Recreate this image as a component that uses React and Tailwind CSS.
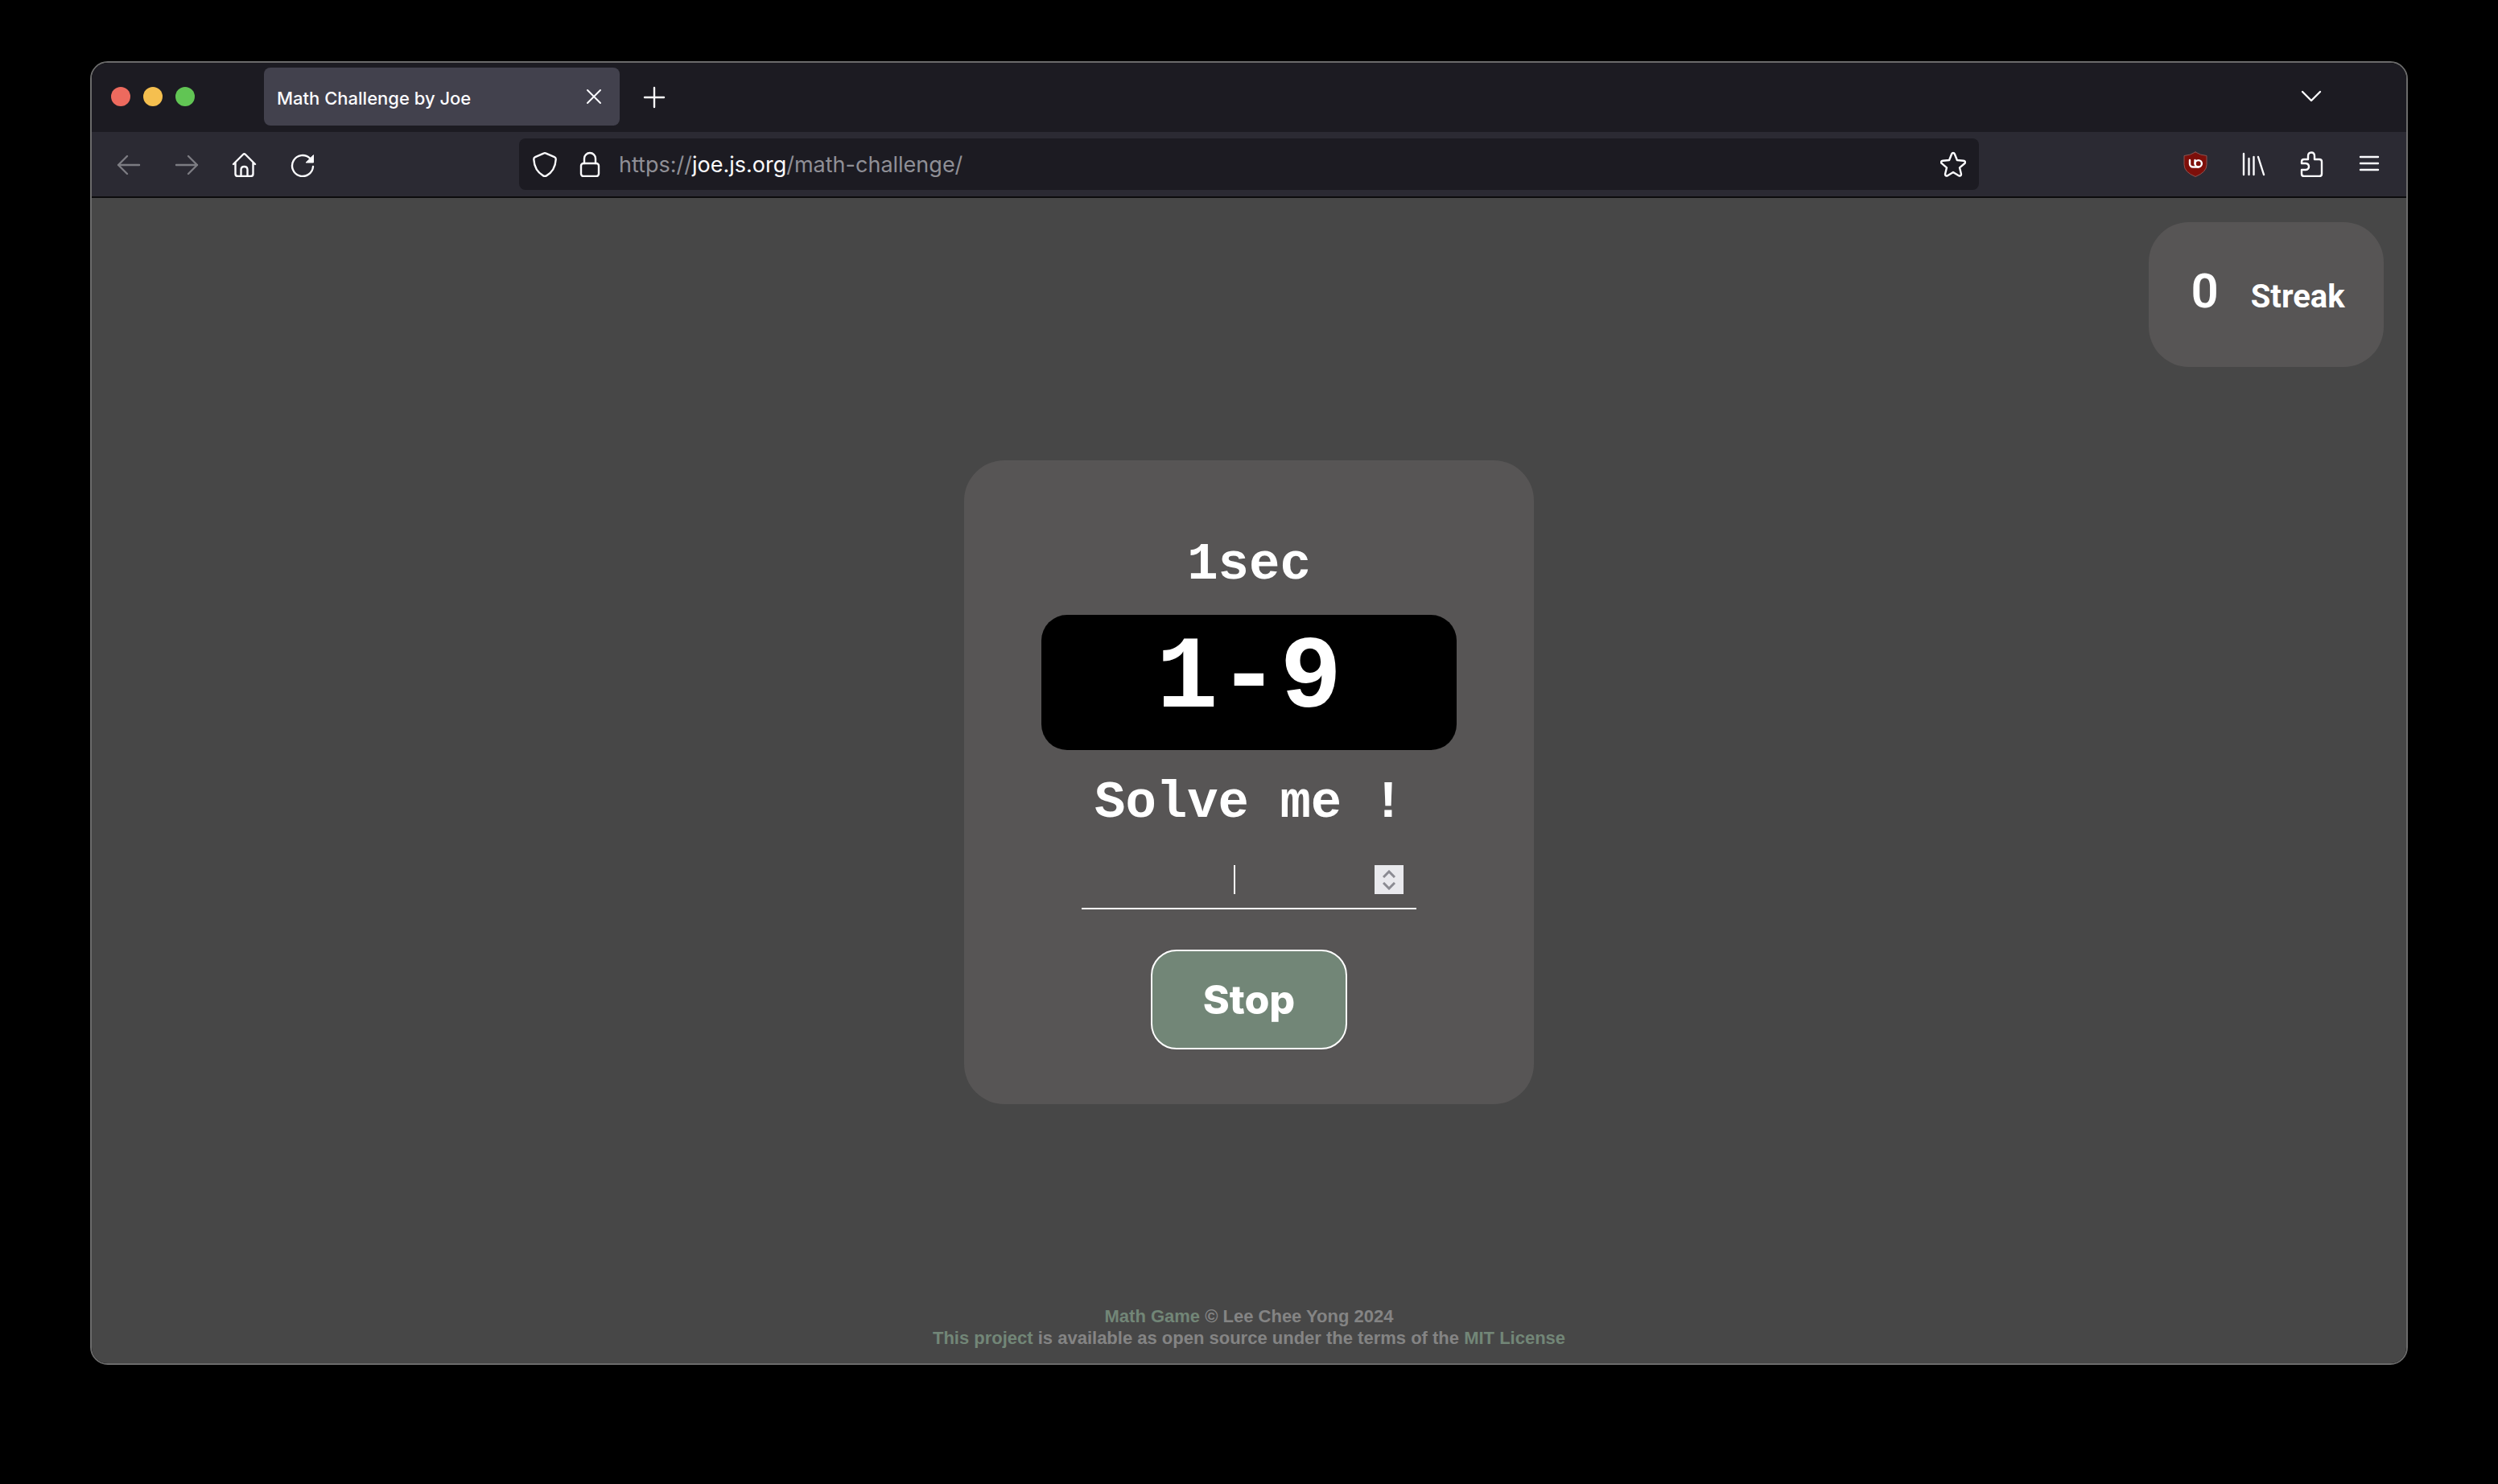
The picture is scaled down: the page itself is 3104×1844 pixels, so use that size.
import React from "react";

function Icon({ children, className = "size-8" }) {
  return (
    <svg
      viewBox="0 0 32 32"
      fill="none"
      stroke="currentColor"
      strokeWidth="2.4"
      strokeLinecap="round"
      strokeLinejoin="round"
      aria-hidden="true"
      className={className}
    >
      {children}
    </svg>
  );
}

function IconButton({ label, children, className = "text-[#fbfbfe]", disabled = false }) {
  return (
    <button type="button" aria-label={label} disabled={disabled} className={className}>
      {children}
    </button>
  );
}

function TabBar() {
  return (
    <div className="flex h-[86px] items-center bg-[#1c1b22] pr-[102px] pb-[2px] pl-6">
      <div className="flex gap-4">
        <button type="button" aria-label="Close window" className="size-6 rounded-full bg-[#ed6a5e]" />
        <button type="button" aria-label="Minimize window" className="size-6 rounded-full bg-[#f5bf4f]" />
        <button type="button" aria-label="Zoom window" className="size-6 rounded-full bg-[#61c554]" />
      </div>
      <div className="ml-[86px] flex h-[72px] w-[442px] items-center justify-between rounded-lg bg-[#42414d] px-4 text-[#fbfbfe]">
        <span className="pt-1 text-[22px] leading-8 font-medium">Math Challenge by Joe</span>
        <IconButton label="Close tab">
          <Icon>
            <path strokeWidth="2" d="M8 8l16 16M24 8L8 24" />
          </Icon>
        </IconButton>
      </div>
      <div className="ml-[27px] flex flex-1 items-center justify-between">
        <IconButton label="New tab">
          <Icon>
            <path d="M16 5v24M4 17h24" />
          </Icon>
        </IconButton>
        <IconButton label="List all tabs">
          <Icon>
            <path d="M5 10l11 11 11-11" />
          </Icon>
        </IconButton>
      </div>
    </div>
  );
}

function AddressBar() {
  return (
    <div className="flex h-16 items-center rounded-lg bg-[#1c1b22] px-4 text-[#fbfbfe]">
      <IconButton label="Tracking protection">
        <Icon>
          <path d="M15 2.400q1-.5 2 0l11 4.800q1.800.8 1.700 2.800c-.5 9.500-4.200 16-11.700 20.400q-2 1.200-4 0C6.500 26 2.800 19.500 2.300 10q-.1-2 1.700-2.800z" />
        </Icon>
      </IconButton>
      <IconButton label="Connection secure" className="ml-6">
        <Icon>
          <rect x="5" y="15" width="22" height="16" rx="3" />
          <path d="M9 15V9a7 7 0 0 1 14 0v6" />
        </Icon>
      </IconButton>
      <div
        role="textbox"
        aria-label="Address"
        tabIndex={0}
        className="ml-5 flex-1 pt-[2px] text-[27px] leading-10 text-[#8f8f96]"
      >
        https://<span className="text-[#fbfbfe]">joe.js.org</span>/math-challenge/
      </div>
      <IconButton label="Bookmark this page">
        <Icon>
          <path d="M16 2c.9 0 1.500.5 1.800 1.200L20.900 11l8 .7c2.200.2 2.800 2.200 1.200 3.500L24 20.300l1.900 7.700c.4 2-1.400 3.200-3 2.200L16 26l-6.900 4.200c-1.600 1-3.400-.2-3-2.200L8 20.300l-6.100-5.100c-1.600-1.300-1-3.300 1.200-3.500l8-.7 3.100-7.800C14.500 2.500 15.100 2 16 2z" />
        </Icon>
      </IconButton>
    </div>
  );
}

function Toolbar() {
  return (
    <div className="grid h-[82px] grid-cols-[12fr_41fr_12fr] items-center border-b-2 border-[#0c0c0d] bg-[#2b2a33]">
      <div className="flex gap-10 pl-[30px]">
        <IconButton label="Back" disabled className="text-[#7c7c82]">
          <Icon>
            <path d="M3 17h26M14 6L3 17l11 11" />
          </Icon>
        </IconButton>
        <IconButton label="Forward" disabled className="text-[#7c7c82]">
          <Icon>
            <path d="M29 17H3M18 6l11 11-11 11" />
          </Icon>
        </IconButton>
        <IconButton label="Home">
          <Icon>
            <path d="M2 16L14 4q1.500-1.500 3 0l12 12M4.500 14v14q0 3 3 3h16q3 0 3-3V14M11.500 31v-8q0-4 4-4t4 4v8" />
          </Icon>
        </IconButton>
        <IconButton label="Reload">
          <Icon>
            <path d="M29 19a13 13 0 1 1-4-10.400" />
            <path fill="currentColor" strokeWidth="1" d="M29.500 5v9H20.500z" />
          </Icon>
        </IconButton>
      </div>
      <AddressBar />
      <div className="flex justify-end gap-10 pr-[30px]">
        <IconButton label="uBlock Origin">
          <Icon>
            <path
              fill="#7d0f0a"
              stroke="#8c5350"
              strokeWidth="1"
              d="M16 1q6 4 14 4.500v11Q30 26 16 31.500 2 26 2 16.500v-11Q10 5 16 1z"
            />
            <path stroke="#fbfbfe" d="M9 11v4.500a4 4 0 0 0 4 4h6.500M15.500 11v4.500" />
            <circle stroke="#fbfbfe" cx="19.700" cy="15.300" r="4.200" />
          </Icon>
        </IconButton>
        <IconButton label="Library">
          <Icon>
            <path d="M4 3v26M10.500 9v20M16.500 7v22M22 7l7 22" />
          </Icon>
        </IconButton>
        <IconButton label="Extensions">
          <Icon>
            <path d="M12 10V6q0-4.500 4-4.500T20 6v4h6q3 0 3 3v15q0 3-3 3H7q-3 0-3-3v-5h5q4-.5 4-4t-4-4H4v-2q0-3 3-3z" />
          </Icon>
        </IconButton>
        <IconButton label="Open application menu">
          <Icon>
            <path d="M5 7h22M5 15h22M5 23h22" />
          </Icon>
        </IconButton>
      </div>
    </div>
  );
}

function Streak() {
  return (
    <section className="flex h-[180px] w-[292px] items-baseline justify-center gap-10 self-start justify-self-end rounded-[50px] bg-[#575555] pt-[54px] pl-1 font-['Roboto',sans-serif] text-white">
      <span className="text-[60px] leading-[64px] font-semibold">0</span>
      <span className="text-[40px] leading-[64px] font-bold">Streak</span>
    </section>
  );
}

function AnswerField() {
  return (
    <div className="mt-6 flex h-[72px] w-[416px] items-center border-b-2 border-white px-4">
      <div className="relative flex flex-1 items-center justify-center">
        <input
          type="number"
          aria-label="Answer"
          className="h-9 w-full [appearance:textfield] bg-transparent text-center text-[32px] text-white caret-transparent outline-none"
        />
        <span className="absolute h-9 w-[2px] bg-white" />
      </div>
      <div className="flex size-9 flex-col bg-[#e9e9ed] py-[3px] text-[#8b8b92]">
        <button type="button" aria-label="Increase" className="flex flex-1 items-center justify-center">
          <svg viewBox="0 0 16 10" fill="none" stroke="currentColor" strokeWidth="3" className="h-[10px] w-4">
            <path d="M1 9l7-7 7 7" />
          </svg>
        </button>
        <button type="button" aria-label="Decrease" className="flex flex-1 items-center justify-center">
          <svg viewBox="0 0 16 10" fill="none" stroke="currentColor" strokeWidth="3" className="h-[10px] w-4">
            <path d="M1 1l7 7 7-7" />
          </svg>
        </button>
      </div>
    </div>
  );
}

function Challenge() {
  return (
    <section className="mb-2 flex h-[800px] w-[708px] flex-col items-center justify-self-center rounded-[50px] bg-[#575555] px-24 pt-[94px] text-white">
      <p className="font-['Liberation_Mono',monospace] text-[64px] leading-[72px] font-bold">1sec</p>
      <div className="mt-[26px] flex h-[168px] w-full justify-center rounded-[32px] bg-black pt-2 font-['Liberation_Mono',monospace] text-[128px] leading-[144px] font-bold">
        1-9
      </div>
      <p className="mt-[30px] font-['Liberation_Mono',monospace] text-[64px] leading-[72px] font-bold">Solve me !</p>
      <AnswerField />
      <button
        type="button"
        className="mt-[50px] h-[124px] w-[244px] rounded-[32px] border-2 border-white bg-[#728677] text-[50px] leading-[64px] font-extrabold"
      >
        Stop
      </button>
    </section>
  );
}

function Footer() {
  return (
    <footer className="self-end text-center font-['Liberation_Sans',Arial,sans-serif] text-[22px] leading-[27px] font-bold text-[#848484]">
      <p>
        <a href="#game" className="text-[#728677]">Math Game</a> © Lee Chee Yong 2024
      </p>
      <p>
        <a href="#project" className="text-[#728677]">This project</a> is available as open source under the terms of the{" "}
        <a href="#license" className="text-[#728677]">MIT License</a>
      </p>
    </footer>
  );
}

export default function App() {
  return (
    <div className="flex min-h-screen flex-col bg-black px-28 pt-[76px] pb-[148px] font-['Inter',sans-serif]">
      <div className="flex flex-1 flex-col overflow-hidden rounded-[22px] border-2 border-[#6b6b6b]">
        <TabBar />
        <Toolbar />
        <main className="grid flex-1 grid-rows-[1fr_auto_1fr] bg-[#474747] px-7 pt-[30px] pb-[18px]">
          <Streak />
          <Challenge />
          <Footer />
        </main>
      </div>
    </div>
  );
}
